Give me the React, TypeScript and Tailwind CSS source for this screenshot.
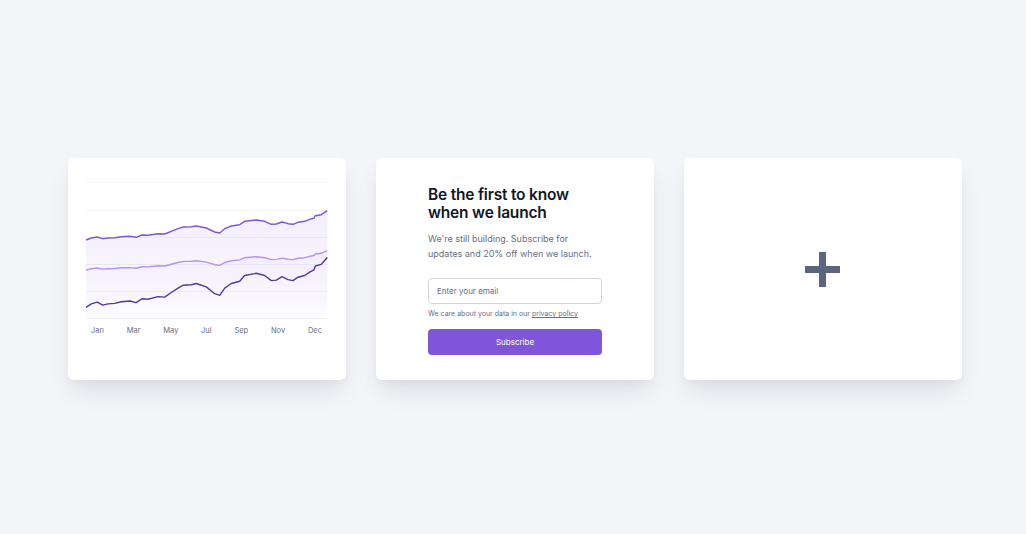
import React from "react";

const topPts: [number, number][] = [
  [0, 58], [5.3, 56], [11.3, 55], [16.7, 56.7], [22, 56], [28.7, 55.7], [35.3, 54.7], [44, 54.3],
  [50, 55.3], [56, 53], [62, 53.3], [72, 51.7], [78.7, 52], [85.3, 49.3], [92, 46.7], [97.3, 45],
  [105.3, 44.7], [110.3, 44], [120.3, 46], [128.7, 50], [133.7, 51], [138.7, 46.7], [145.3, 44],
  [153.7, 42.7], [158.7, 39.3], [170.3, 38], [178.7, 39.3], [185.3, 42.3], [190.3, 42], [196, 40],
  [202, 41.7], [207, 42.3], [212, 40.3], [218.7, 39.3], [223.7, 37.3], [228, 36], [229.3, 33.7],
  [235.3, 32.7], [241.3, 28.7],
];

const mk = (base: number, k: number) =>
  topPts.map(([x, y]) => [x, base + k * (y - 58)] as [number, number]);

const toPath = (pts: [number, number][]) =>
  pts.map(([x, y], i) => `${i === 0 ? "M" : "L"}${x.toFixed(1)} ${y.toFixed(1)}`).join(" ");

const top = mk(58, 1);
const mid = mk(88, 0.66);
const bot = mk(125.3, 1.7);

function Chart() {
  const grid = [0.5, 28.5, 55.5, 82.5, 109.5, 136.5];
  const area = (pts: [number, number][]) => `${toPath(pts)} L241.3 137 L0 137 Z`;
  return (
    <div className="flex flex-col pl-[18px] pt-[24px]">
      <svg width="243" height="138" viewBox="0 0 243 138" className="block overflow-visible">
        <defs>
          <linearGradient id="ga" x1="0" y1="0" x2="0" y2="1">
            <stop offset="0" stopColor="#9E77ED" stopOpacity="0.13" />
            <stop offset="1" stopColor="#9E77ED" stopOpacity="0.02" />
          </linearGradient>
          <linearGradient id="gb" x1="0" y1="0" x2="0" y2="1">
            <stop offset="0" stopColor="#9E77ED" stopOpacity="0.05" />
            <stop offset="1" stopColor="#9E77ED" stopOpacity="0" />
          </linearGradient>
        </defs>
        {grid.map((y) => (
          <line key={y} x1="0" x2="241.3" y1={y} y2={y} stroke="#f2f2f7" strokeWidth="1" />
        ))}
        <path d={area(top)} fill="url(#ga)" />
        <path d={area(mid)} fill="url(#gb)" />
        <path d={toPath(top)} fill="none" stroke="#7F56D9" strokeWidth="1.4" strokeLinejoin="round" />
        <path d={toPath(mid)} fill="none" stroke="#B692F6" strokeWidth="1.4" strokeLinejoin="round" />
        <path d={toPath(bot)} fill="none" stroke="#53389E" strokeWidth="1.4" strokeLinejoin="round" />
      </svg>
      <div className="mt-[6px] flex w-[241px] justify-between pl-[5px] pr-[5px] text-[7.5px] leading-[10px] text-[#667085]">
        {["Jan", "Mar", "May", "Jul", "Sep", "Nov", "Dec"].map((m) => (
          <span key={m}>{m}</span>
        ))}
      </div>
    </div>
  );
}

function Card({ children, className = "" }: { children?: React.ReactNode; className?: string }) {
  return (
    <div
      className={`h-[222px] w-[278px] rounded-[6px] bg-white shadow-[0_14px_24px_-4px_rgba(16,24,40,0.10),0_4px_8px_-2px_rgba(16,24,40,0.04)] ${className}`}
    >
      {children}
    </div>
  );
}

export default function App() {
  return (
    <div
      className="flex h-[534px] w-full items-center justify-center gap-[30px] bg-[#f4f5f9] pl-[4px] pt-[4px]"
      style={{ fontFamily: "Inter, 'Noto Sans', sans-serif" }}
    >
      <Card>
        <Chart />
      </Card>
      <Card className="flex flex-col px-[52px] pt-[28px]">
        <h2 className="whitespace-nowrap text-[15.5px] font-semibold leading-[18px] tracking-[-0.2px] text-[#101828]">
          Be the first to know
          <br />
          when we launch
        </h2>
        <p className="mt-[10px] whitespace-nowrap text-[9px] leading-[14.5px] text-[#667085]">
          We're still building. Subscribe for
          <br />
          updates and 20% off when we launch.
        </p>
        <div className="mt-[17px] flex h-[26px] items-center rounded-[4px] border border-[#D0D5DD] px-[8px] text-[8px] text-[#667085]">
          Enter your email
        </div>
        <p className="mt-[5px] whitespace-nowrap text-[7px] leading-[10px] text-[#667085]">
          We care about your data in our <span className="underline">privacy policy</span>
        </p>
        <button className="mt-[10px] flex h-[26px] items-center justify-center rounded-[4px] bg-[#7F56D9] text-[8px] text-white">
          Subscribe
        </button>
      </Card>
      <Card className="flex items-center justify-center">
        <div className="relative h-[35px] w-[35px] -translate-x-[1px]">
          <div className="absolute left-0 top-[14px] h-[7px] w-[35px] bg-[#5a6580]" />
          <div className="absolute left-[14px] top-0 h-[35px] w-[7px] bg-[#5a6580]" />
        </div>
      </Card>
    </div>
  );
}
